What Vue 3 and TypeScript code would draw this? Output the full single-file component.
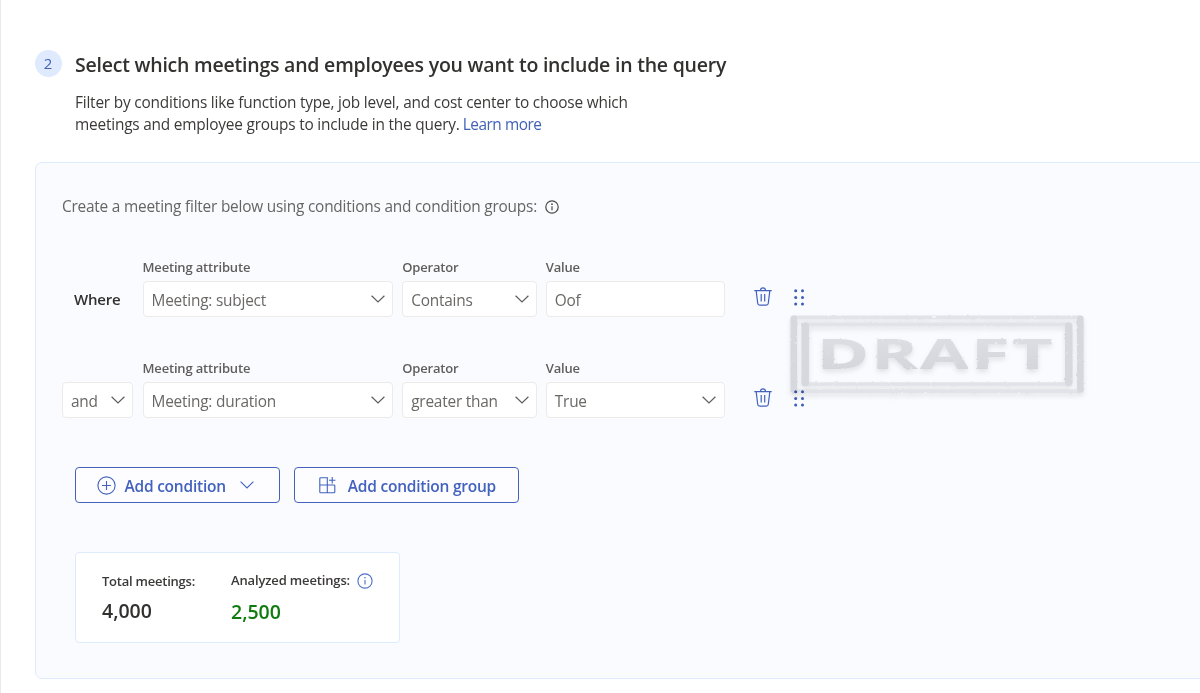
<script setup lang="ts">
interface Field {
  label: string
  value: string
  size: 'wide' | 'narrow' | 'medium'
  select: boolean
}
interface Condition {
  joiner: string
  joinerSelect: boolean
  fields: Field[]
}

const conditions: Condition[] = [
  {
    joiner: 'Where',
    joinerSelect: false,
    fields: [
      { label: 'Meeting attribute', value: 'Meeting: subject', size: 'wide', select: true },
      { label: 'Operator', value: 'Contains', size: 'narrow', select: true },
      { label: 'Value', value: 'Oof', size: 'medium', select: false },
    ],
  },
  {
    joiner: 'and',
    joinerSelect: true,
    fields: [
      { label: 'Meeting attribute', value: 'Meeting: duration', size: 'wide', select: true },
      { label: 'Operator', value: 'greater than', size: 'narrow', select: true },
      { label: 'Value', value: 'True', size: 'medium', select: true },
    ],
  },
]

const specks: [number, number, number][] = [
  [6, 28, 1], [4, 46, 0.8], [144, 2, 1.8], [149, 4, 0.9], [69, 3, 0.8], [241, 4, 1.2], [245, 2, 1],
  [168, 4, 0.7], [38, 38, 0.8], [43, 50, 0.7], [146, 51, 1], [166, 47, 1.2], [187, 46, 1.5],
  [206, 28, 1.4], [209, 31, 0.9], [227, 28, 1.2], [109, 26, 0.8], [277, 38, 1], [280, 69, 0.9],
  [290, 45, 0.8], [92, 69, 0.7], [20, 62, 0.8], [292, 18, 0.7], [121, 53, 0.9],
]
</script>

<template>
  <main class="page">
    <header class="step">
      <span class="badge">2</span>
      <div class="step-text">
        <h1>Select which meetings and employees you want to include in the query</h1>
        <p>
          Filter by conditions like function type, job level, and cost center to choose which<br />
          meetings and employee groups to include in the query. <a>Learn more</a>
        </p>
      </div>
    </header>

    <section class="panel">
      <div class="intro">
        <span>Create a meeting filter below using conditions and condition groups:</span>
        <svg class="info" width="14" height="14" viewBox="0 0 14 14">
          <circle cx="7" cy="7" r="6.2" />
          <path d="M7 6.3v3.9" />
          <circle class="dot" cx="7" cy="4.2" r="0.85" />
        </svg>
      </div>

      <div class="rows">
        <div v-for="c in conditions" :key="c.joiner" class="row">
          <div class="joiner">
            <div v-if="c.joinerSelect" class="box">
              <span>{{ c.joiner }}</span>
              <svg class="chevron" width="14" height="8" viewBox="0 0 14 8"><path d="M.6.7 7 7 13.4.7" /></svg>
            </div>
            <strong v-else>{{ c.joiner }}</strong>
          </div>
          <div v-for="f in c.fields" :key="f.label" class="field" :class="f.size">
            <label>{{ f.label }}</label>
            <div class="box">
              <span>{{ f.value }}</span>
              <svg v-if="f.select" class="chevron" width="14" height="8" viewBox="0 0 14 8"><path d="M.6.7 7 7 13.4.7" /></svg>
            </div>
          </div>
          <svg class="trash" width="18" height="19" viewBox="0 0 18 19">
            <path d="M.3 3.7h17.4M6.5 3.5C6.6 1.8 7.5.8 9 .8s2.400 1 2.500 2.700M2.200 3.900l1.500 12.300c.1 1.200.9 1.900 2 1.900h6.600c1.100 0 1.900-.7 2-1.900l1.500-12.300M7.200 7v7.600M10.700 7v7.600" />
          </svg>
          <svg class="grip" width="12" height="20" viewBox="0 0 12 20">
            <template v-for="y in [3.7, 10.4, 17.1]" :key="y">
              <circle cx="2.700" :cy="y" r="1.500" />
              <circle cx="9.500" :cy="y" r="1.500" />
            </template>
          </svg>
        </div>
      </div>

      <div class="actions">
        <button class="add">
          <svg width="19" height="19" viewBox="0 0 19 19"><circle cx="9.500" cy="9.500" r="8.600" /><path d="M9.500 5v9M5 9.500h9" /></svg>
          <span>Add condition</span>
          <svg width="14" height="8" viewBox="0 0 14 8"><path d="M.6.7 7 7 13.4.7" /></svg>
        </button>
        <button class="add group">
          <svg width="18" height="18" viewBox="0 0 18 18">
            <path d="M8.300 9V1.800H1.600q-.8 0-.8.8v13.400q0 .8.8.8H15q.8 0 .8-.8V9.800q0-.8-.8-.8H.8M8.300 9v7.800M13.200 1v6.400M10 4.200h6.400" />
          </svg>
          <span>Add condition group</span>
        </button>
      </div>

      <div class="card">
        <div class="stat">
          <span class="stat-label">Total meetings:</span>
          <span class="stat-value">4,000</span>
        </div>
        <div class="stat analyzed">
          <span class="stat-label">
            Analyzed meetings:
            <svg class="info" width="16" height="16" viewBox="0 0 16 16">
              <circle cx="8" cy="8" r="7.100" />
              <path d="M8 7v4.600" />
              <circle class="dot" cx="8" cy="4.800" r="0.800" />
            </svg>
          </span>
          <span class="stat-value">2,500</span>
        </div>
      </div>
    </section>

    <svg class="stamp" width="310" height="96" viewBox="-8 -6 310 96">
      <defs>
        <linearGradient id="ink" x1="0" y1="0" x2="0" y2="1">
          <stop offset="0" stop-color="#e5e5e6" />
          <stop offset="1" stop-color="#d7d7d8" />
        </linearGradient>
        <filter id="rough" x="-5%" y="-10%" width="110%" height="130%" color-interpolation-filters="sRGB">
          <feTurbulence type="fractalNoise" baseFrequency="0.35" numOctaves="2" seed="4" result="n" />
          <feDisplacementMap in="SourceGraphic" in2="n" scale="2.200" xChannelSelector="R" yChannelSelector="G" result="d" />
          <feGaussianBlur in="d" stdDeviation="0.500" result="soft" />
          <feDropShadow in="soft" dx="0" dy="3" stdDeviation="2.500" flood-color="#555" flood-opacity="0.150" />
        </filter>
        <mask id="worn">
          <rect x="-8" y="-6" width="310" height="96" fill="#fff" />
          <ellipse v-for="([x, y, r], i) in specks" :key="i" :cx="x" :cy="y" :rx="r * 1.200" :ry="r * 0.700" fill="#333" />
        </mask>
      </defs>
      <g filter="url(#rough)">
        <g mask="url(#worn)">
          <path class="ink-h" d="M4 .5h286v3.700H4zM4 74.300h286V78H4zM15 7.500h264v3.700H15zM15 67.300h264V71H15z" />
          <rect class="ink-v" x="0.500" y="0.500" width="6.600" height="77.500" rx="3" />
          <rect class="ink-v" x="287" y="0.500" width="6.600" height="77.500" rx="3" />
          <rect class="ink-v" x="11.500" y="7.500" width="7.500" height="63.500" rx="3" />
          <rect class="ink-v" x="275" y="7.500" width="7.500" height="63.500" rx="3" />
          <text class="stamp-text" transform="translate(26.500 54) scale(1.740 1)" fill="url(#ink)">DRAFT</text>
        </g>
      </g>
    </svg>
  </main>
</template>

<style>
body {
  background: #fff;
  overflow: hidden;
}
</style>

<style scoped>
* {
  box-sizing: border-box;
}
.page {
  position: relative;
  height: 693px;
  padding: 50px 0 0 34px;
  border-left: 1px solid #e9e9ea;
  overflow: hidden;
  font: 400 15.4px/22.5px "Open Sans", "Noto Sans", sans-serif;
  color: #3b3a39;
}
.step {
  display: flex;
  gap: 13px;
}
.badge {
  width: 27px;
  height: 27px;
  padding-right: 1px;
  border-radius: 50%;
  background: #dfeafe;
  color: #4263b8;
  font-size: 15px;
  font-weight: 500;
  line-height: 26px;
  text-align: center;
}
h1 {
  margin: 2px 0 13.5px;
  font-size: 19.5px;
  font-weight: 600;
  line-height: 26px;
  letter-spacing: -0.22px;
  color: #323130;
}
.step p {
  margin: 0 0 -0.5px;
  letter-spacing: -0.2px;
  white-space: nowrap;
}
a {
  margin-left: -0.8px;
  color: #4262b8;
  letter-spacing: -0.45px;
}
.panel {
  width: 1180px;
  height: 517px;
  margin-top: 26px;
  padding: 32px 0 0 26px;
  border: 1px solid #deeafd;
  border-radius: 7px;
  background: #fafbff;
}
.intro {
  display: flex;
  align-items: center;
  gap: 8.5px;
  height: 22px;
  color: #666564;
  letter-spacing: -0.21px;
}
.info {
  fill: none;
  stroke: #4a4948;
  stroke-width: 1.2;
}
.intro span {
  margin-top: 3px;
}
.intro .info {
  margin-top: 2px;
}
.info .dot {
  fill: #4a4948;
  stroke: none;
}
.rows {
  display: flex;
  flex-direction: column;
  gap: 42px;
  margin-top: 41px;
}
.row {
  display: flex;
  align-items: flex-end;
  height: 59px;
}
.joiner {
  width: 71px;
  margin-right: 9.5px;
}
.joiner strong {
  display: block;
  padding-left: 12px;
  font-size: 15px;
  font-weight: 600;
  line-height: 36px;
  letter-spacing: -0.2px;
  color: #323130;
}
.field {
  margin-right: 9px;
}
.wide {
  width: 250.7px;
}
.narrow {
  width: 135px;
  margin-right: 8.6px;
}
.medium {
  width: 179.2px;
  margin-right: 29px;
}
label {
  display: block;
  height: 23px;
  font-size: 13px;
  font-weight: 600;
  line-height: 18px;
  letter-spacing: -0.17px;
  color: #605e5c;
}
.box {
  display: flex;
  align-items: center;
  justify-content: space-between;
  height: 36px;
  padding: 0 7.5px 0 8px;
  border: 1px solid #edebe9;
  border-radius: 4px;
  background: #fff;
  color: #6a6866;
}
.box span {
  padding-top: 4px;
  letter-spacing: -0.21px;
}
.chevron {
  fill: none;
  stroke: #605e5c;
  stroke-width: 1.2;
}
.trash {
  margin: 0 21px 11px 0;
  fill: none;
  stroke: #4262bd;
  stroke-width: 1.2;
}
.grip {
  margin-bottom: 10px;
  fill: #3b5cb8;
}
.actions {
  display: flex;
  gap: 13.4px;
  margin: 49px 0 49px 13px;
}
.add {
  display: flex;
  align-items: center;
  width: 205.4px;
  height: 36px;
  padding: 0 0 0 21px;
  border: 1.4px solid #4262bd;
  border-radius: 4px;
  background: #fdfdff;
  color: #4262bd;
  font: 600 15.5px/22px "Open Sans", "Noto Sans", sans-serif;
  letter-spacing: -0.23px;
  white-space: nowrap;
}
.add span {
  margin: 2px 14px 0 8.5px;
}
.group {
  width: 225.4px;
  padding-left: 24px;
}
.group span {
  margin-left: 11px;
}
.add svg {
  fill: none;
  stroke: #4262bd;
  stroke-width: 1.1;
}
.card {
  display: flex;
  gap: 36px;
  width: 325px;
  height: 91px;
  margin-left: 13px;
  padding: 19px 0 0 26px;
  border: 1px solid #deeafd;
  border-radius: 4px;
  background: #fff;
}
.stat {
  display: flex;
  flex-direction: column;
}
.stat-label {
  display: flex;
  align-items: center;
  gap: 7px;
  height: 18px;
  font-size: 13px;
  font-weight: 600;
  letter-spacing: -0.23px;
}
.analyzed .stat-label {
  margin-top: -1px;
  letter-spacing: -0.15px;
}
.stat-value {
  margin-top: 8px;
  font-size: 19.5px;
  font-weight: 600;
  line-height: 26px;
  color: #323130;
}
.analyzed .stat-value {
  margin-top: 10px;
  color: #107c10;
}
.analyzed .info {
  margin-top: 2px;
  stroke: #4f6fc8;
  stroke-width: 1.1;
}
.analyzed .dot {
  fill: #4f6fc8;
}
.stamp {
  position: absolute;
  left: 781px;
  top: 309px;
  mix-blend-mode: multiply;
}
.ink-h {
  fill: #e7e7e8;
}
.ink-v {
  fill: #dcdcdd;
}
.stamp-text {
  font: 750 41px "Open Sans", sans-serif;
  letter-spacing: 1px;
}
</style>
